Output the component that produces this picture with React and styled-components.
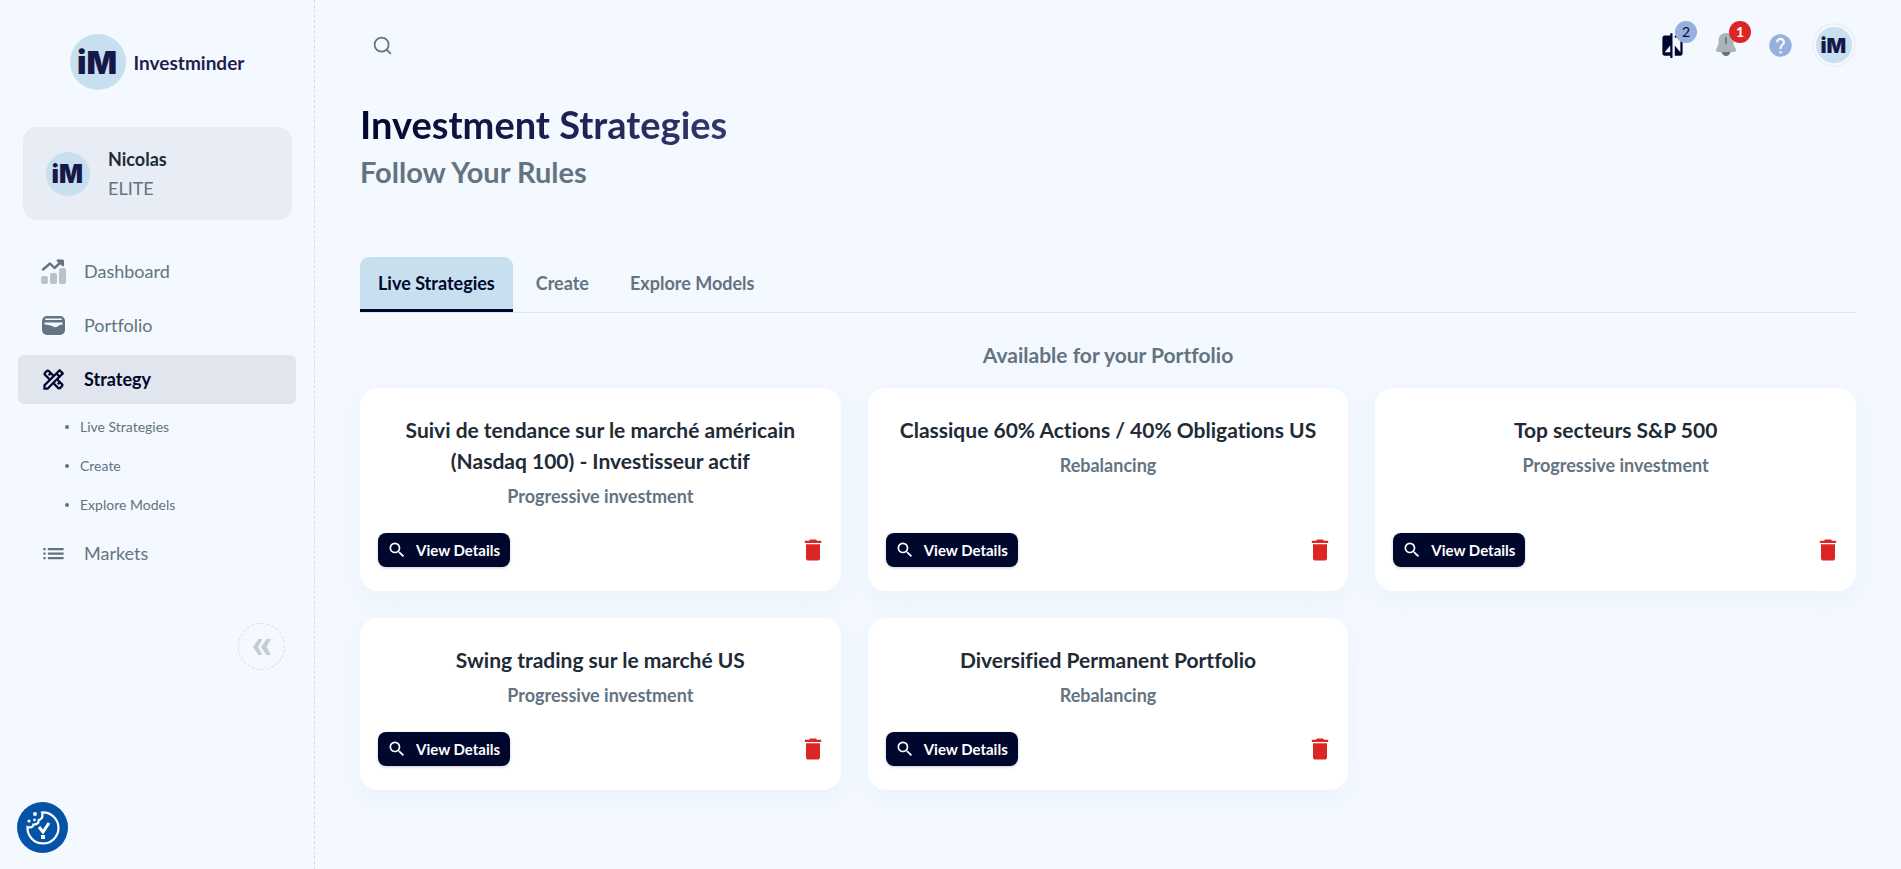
import React, { useState } from "react";
import styled, { createGlobalStyle } from "styled-components";
import {
  MdCompare,
  MdDelete,
  MdHelp,
  MdList,
  MdOutlineDesignServices,
  MdSearch,
} from "react-icons/md";
import { Search } from "lucide-react";

const strategies = [
  {
    name: "Suivi de tendance sur le marché américain (Nasdaq 100) - Investisseur actif",
    type: "Progressive investment",
  },
  { name: "Classique 60% Actions / 40% Obligations US", type: "Rebalancing" },
  { name: "Top secteurs S&P 500", type: "Progressive investment" },
  { name: "Swing trading sur le marché US", type: "Progressive investment" },
  { name: "Diversified Permanent Portfolio", type: "Rebalancing" },
];

const tabs = ["Live Strategies", "Create", "Explore Models"];

function Logo({ size }) {
  return (
    <svg width={size} height={size} viewBox="0 0 56 56" role="img" aria-label="iM">
      <circle cx="28" cy="28" r="28" fill="#c8dff0" />
      <text
        x="27"
        y="40"
        textAnchor="middle"
        fontFamily="Inter, sans-serif"
        fontWeight="900"
        fontSize="32"
        fill="#17184a"
      >
        iM
      </text>
    </svg>
  );
}

function DashboardIcon() {
  return (
    <svg width="27" height="27" viewBox="0 0 27 27" fill="currentColor">
      <g opacity="0.4">
        <rect x="1" y="18" width="7" height="8" rx="2" />
        <rect x="10" y="15" width="7" height="11" rx="2" />
        <rect x="19" y="10" width="7" height="16" rx="2" />
      </g>
      <path
        d="M3 11.500l7-6 4.500 4.500L21 4"
        fill="none"
        stroke="currentColor"
        strokeWidth="2.400"
        strokeLinecap="round"
        strokeLinejoin="round"
      />
      <path d="M17 1.500h5.500q1.500 0 1.500 1.500v5q-1 .8-2-.3L17 3.500q-1-1.200 0-2z" />
    </svg>
  );
}

function WalletIcon() {
  return (
    <svg width="27" height="27" viewBox="0 0 27 27">
      <rect x="2" y="4" width="23" height="19" rx="5" fill="currentColor" />
      <rect x="5" y="6.500" width="17" height="1.600" rx=".8" fill="#f4f9ff" />
      <path
        d="M4.500 10.500h18v2q-3 0-5 2-1.500 1.200-3 .6l-4-1.600q-3-1-6-1z"
        fill="#f4f9ff"
      />
    </svg>
  );
}

function BellIcon() {
  return (
    <svg width="24" height="26" viewBox="0 0 24 26">
      <path d="M7 19h10q-1.500 5-5 5t-5-5z" fill="#637381" />
      <path
        d="M12 1c4.500 0 7.500 3.200 7.500 7.500v4l2.200 4.200c.9 2-.2 3.300-2.200 3.300h-15c-2 0-3.100-1.300-2.200-3.300l2.200-4.200v-4C4.500 4.200 7.500 1 12 1z"
        fill="#a9b4bd"
      />
      <path d="M12 6v5" stroke="#637381" strokeWidth="1.800" strokeLinecap="round" />
    </svg>
  );
}

function CollapseIcon() {
  return (
    <svg width="18" height="18" viewBox="0 0 18 18" fill="#c4cdd5">
      <path d="M5.500 1H9.500L5 9l4.500 8h-4L0 9z" />
      <path d="M13.500 1H18l-4.500 8 4.500 8h-4.500L8 9z" />
    </svg>
  );
}

function CookieIcon() {
  return (
    <svg width="34" height="34" viewBox="0 0 34 34" fill="#fff">
      <path
        d="M16 1.500A15.500 15.500 0 1 1 1.500 16c3 1 5.500.2 6-2.500 3.500.2 5.500-1.500 5.200-4.500C16 8 17 5 16 1.500z"
        fill="none"
        stroke="#fff"
        strokeWidth="2.200"
      />
      <circle cx="9" cy="3" r="2" />
      <circle cx="3" cy="10" r="1.600" />
      <circle cx="8.500" cy="9" r="1.400" />
      <path
        d="M13 16l4 5 6-9"
        fill="none"
        stroke="#fff"
        strokeWidth="3"
      />
      <rect x="15" y="24" width="4" height="4" />
    </svg>
  );
}

function Sidebar() {
  return (
    <Aside>
      <Brand href="#">
        <Logo size={56} />
        Investminder
      </Brand>
      <UserCard>
        <Logo size={44} />
        <div>
          <UserName>Nicolas</UserName>
          <UserPlan>ELITE</UserPlan>
        </div>
      </UserCard>
      <Nav>
        <NavItem href="#">
          <DashboardIcon />
          Dashboard
        </NavItem>
        <NavItem href="#">
          <WalletIcon />
          Portfolio
        </NavItem>
        <NavItem href="#" $active>
          <MdOutlineDesignServices size={27} />
          Strategy
        </NavItem>
        <SubNav>
          {tabs.map((tab) => (
            <li key={tab}>
              <a href="#">{tab}</a>
            </li>
          ))}
        </SubNav>
        <NavItem href="#">
          <MdList size={27} />
          Markets
        </NavItem>
      </Nav>
      <CollapseButton aria-label="Collapse menu">
        <CollapseIcon />
      </CollapseButton>
    </Aside>
  );
}

function Header() {
  return (
    <TopBar>
      <IconButton aria-label="Search">
        <Search size={21} color="#637381" />
      </IconButton>
      <Actions>
        <IconButton aria-label="Compare">
          <MdCompare size={27} color="#00072d" />
          <Badge>2</Badge>
        </IconButton>
        <IconButton aria-label="Notifications">
          <BellIcon />
          <Badge $alert>1</Badge>
        </IconButton>
        <IconButton aria-label="Help">
          <MdHelp size={27} color="#98b0de" />
        </IconButton>
        <AvatarButton aria-label="Account">
          <Logo size={36} />
        </AvatarButton>
      </Actions>
    </TopBar>
  );
}

function StrategyCard({ name, type }) {
  return (
    <Card>
      <CardTitle>{name}</CardTitle>
      <CardType>{type}</CardType>
      <CardFooter>
        <DetailsButton>
          <MdSearch size={20} />
          View Details
        </DetailsButton>
        <DeleteButton aria-label={`Delete ${name}`}>
          <MdDelete size={28} />
        </DeleteButton>
      </CardFooter>
    </Card>
  );
}

function App() {
  const [activeTab, setActiveTab] = useState(tabs[0]);

  return (
    <Layout>
      <GlobalStyle />
      <Sidebar />
      <Main>
        <Header />
        <Title>Investment Strategies</Title>
        <Subtitle>Follow Your Rules</Subtitle>
        <Tabs role="tablist">
          {tabs.map((tab) => (
            <Tab
              key={tab}
              role="tab"
              aria-selected={tab === activeTab}
              $active={tab === activeTab}
              onClick={() => setActiveTab(tab)}
            >
              {tab}
            </Tab>
          ))}
        </Tabs>
        <SectionTitle>Available for your Portfolio</SectionTitle>
        <Grid>
          {strategies.map((strategy) => (
            <StrategyCard key={strategy.name} {...strategy} />
          ))}
        </Grid>
      </Main>
      <CookieButton aria-label="Cookie settings">
        <CookieIcon />
      </CookieButton>
    </Layout>
  );
}

const GlobalStyle = createGlobalStyle`
  * {
    box-sizing: border-box;
  }
  body {
    margin: 0;
    background-color: #f4f9ff;
    color: #637381;
    font-family: Lato, sans-serif;
    font-size: 18px;
    font-variant-ligatures: none;
    line-height: 27px;
  }
  h1, h2, h3, h4, p, ul {
    margin: 0;
    padding: 0;
  }
  a {
    color: inherit;
    text-decoration: none;
  }
  button {
    border: none;
    padding: 0;
    background: none;
    color: inherit;
    font: inherit;
    font-variant-ligatures: none;
    cursor: pointer;
  }
  svg {
    display: block;
    flex-shrink: 0;
  }
`;

const Layout = styled.div`
  display: flex;
  min-height: 100vh;
`;

const Aside = styled.aside`
  display: flex;
  flex-direction: column;
  flex-shrink: 0;
  width: 315px;
  padding: 34px 18px 0;
  border-right: 1px dashed #d5dce4;
`;

const Brand = styled.a`
  display: flex;
  align-items: center;
  align-self: center;
  gap: 8px;
  font-size: 19px;
  font-weight: 700;
  color: #1f1f4e;
`;

const UserCard = styled.div`
  display: flex;
  align-items: center;
  gap: 18px;
  margin: 37px 4px 27px 5px;
  padding: 18px 23px;
  border-radius: 14px;
  background-color: #e8ecf4;
`;

const UserName = styled.p`
  line-height: 29px;
  font-weight: 700;
  color: #212b36;
`;

const UserPlan = styled.p`
  line-height: 28px;
`;

const Nav = styled.nav`
  display: flex;
  flex-direction: column;
  gap: 5px;
`;

const NavItem = styled.a`
  display: flex;
  align-items: center;
  gap: 17px;
  height: 49px;
  padding: 0 22px;
  border-radius: 6px;
  background-color: ${({ $active }) => ($active ? "#e0e5ee" : "transparent")};
  color: ${({ $active }) => ($active ? "#00072d" : "#637381")};
  font-weight: ${({ $active }) => ($active ? 700 : 400)};
`;

const SubNav = styled.ul`
  margin-top: -2px;
  list-style: none;
  li {
    display: flex;
    align-items: center;
    gap: 11px;
    height: 39px;
    padding-left: 47px;
    font-size: 14px;
  }
  li::before {
    content: "";
    width: 4px;
    height: 4px;
    border-radius: 50%;
    background-color: #637381;
  }
`;

const CollapseButton = styled.button`
  display: flex;
  align-items: center;
  justify-content: center;
  align-self: flex-end;
  width: 47px;
  height: 47px;
  margin: 45px 11px 0;
  border: 1px dashed #d5dce4;
  border-radius: 50%;
`;

const Main = styled.main`
  flex: 1;
  min-width: 0;
  padding: 18px 45px 45px;
`;

const TopBar = styled.header`
  display: flex;
  align-items: center;
  justify-content: space-between;
  height: 54px;
`;

const Actions = styled.div`
  display: flex;
  align-items: center;
  gap: 10px;
`;

const IconButton = styled.button`
  position: relative;
  display: flex;
  align-items: center;
  justify-content: center;
  width: 44px;
  height: 44px;
`;

const Badge = styled.span`
  position: absolute;
  top: -2px;
  right: -3px;
  width: 22px;
  height: 22px;
  border-radius: 50%;
  background-color: ${({ $alert }) => ($alert ? "#dc2626" : "#98b0de")};
  color: ${({ $alert }) => ($alert ? "#fff" : "#00072d")};
  font-size: 14px;
  font-weight: ${({ $alert }) => ($alert ? 700 : 400)};
  line-height: 22px;
  text-align: center;
`;

const AvatarButton = styled.button`
  padding: 2px;
  border: 2px solid #edf1f6;
  border-radius: 50%;
`;

const Title = styled.h1`
  width: fit-content;
  margin: 25px 0 2px;
  font-size: 38px;
  font-weight: 700;
  line-height: 54px;
  color: transparent;
  background: linear-gradient(90deg, #00072d, #33386b);
  background-clip: text;
`;

const Subtitle = styled.h2`
  font-size: 29px;
  font-weight: 700;
  line-height: 38px;
`;

const Tabs = styled.div`
  display: flex;
  gap: 5px;
  margin-top: 66px;
  border-bottom: 1px solid #dde4ec;
`;

const Tab = styled.button`
  height: 55px;
  padding: 0 18px;
  border-bottom: 3px solid ${({ $active }) => ($active ? "#00072d" : "transparent")};
  border-radius: 9px 9px 0 0;
  background-color: ${({ $active }) => ($active ? "#c8dff0" : "transparent")};
  color: ${({ $active }) => ($active ? "#00072d" : "#637381")};
  font-weight: 700;
`;

const SectionTitle = styled.h3`
  margin: 27px 0 18px;
  font-size: 21px;
  font-weight: 700;
  line-height: 30px;
  text-align: center;
`;

const Grid = styled.div`
  display: grid;
  grid-template-columns: repeat(3, minmax(0, 1fr));
  gap: 27px;
`;

const Card = styled.article`
  display: flex;
  flex-direction: column;
  padding: 26px 18px 24px;
  border-radius: 18px;
  background-color: #fff;
  box-shadow: 0 8px 24px rgba(145, 175, 220, 0.1);
`;

const CardTitle = styled.h4`
  font-size: 21px;
  font-weight: 700;
  line-height: 31px;
  text-align: center;
  color: #212b36;
`;

const CardType = styled.p`
  margin: 7px 0 23px;
  font-weight: 700;
  text-align: center;
`;

const CardFooter = styled.div`
  display: flex;
  align-items: center;
  justify-content: space-between;
  margin-top: auto;
`;

const DetailsButton = styled.button`
  display: flex;
  align-items: center;
  gap: 9px;
  height: 34px;
  padding: 0 10px 0 9px;
  border-radius: 8px;
  background-color: #00072d;
  box-shadow: 0 1px 3px rgba(0, 7, 45, 0.2);
  color: #fff;
  font-size: 15px;
  font-weight: 700;
`;

const DeleteButton = styled.button`
  margin-right: -4px;
  color: #dc2626;
`;

const CookieButton = styled.button`
  position: fixed;
  bottom: 16px;
  left: 17px;
  display: flex;
  align-items: center;
  justify-content: center;
  width: 51px;
  height: 51px;
  border-radius: 50%;
  background-color: #0453a6;
`;

export default App;
